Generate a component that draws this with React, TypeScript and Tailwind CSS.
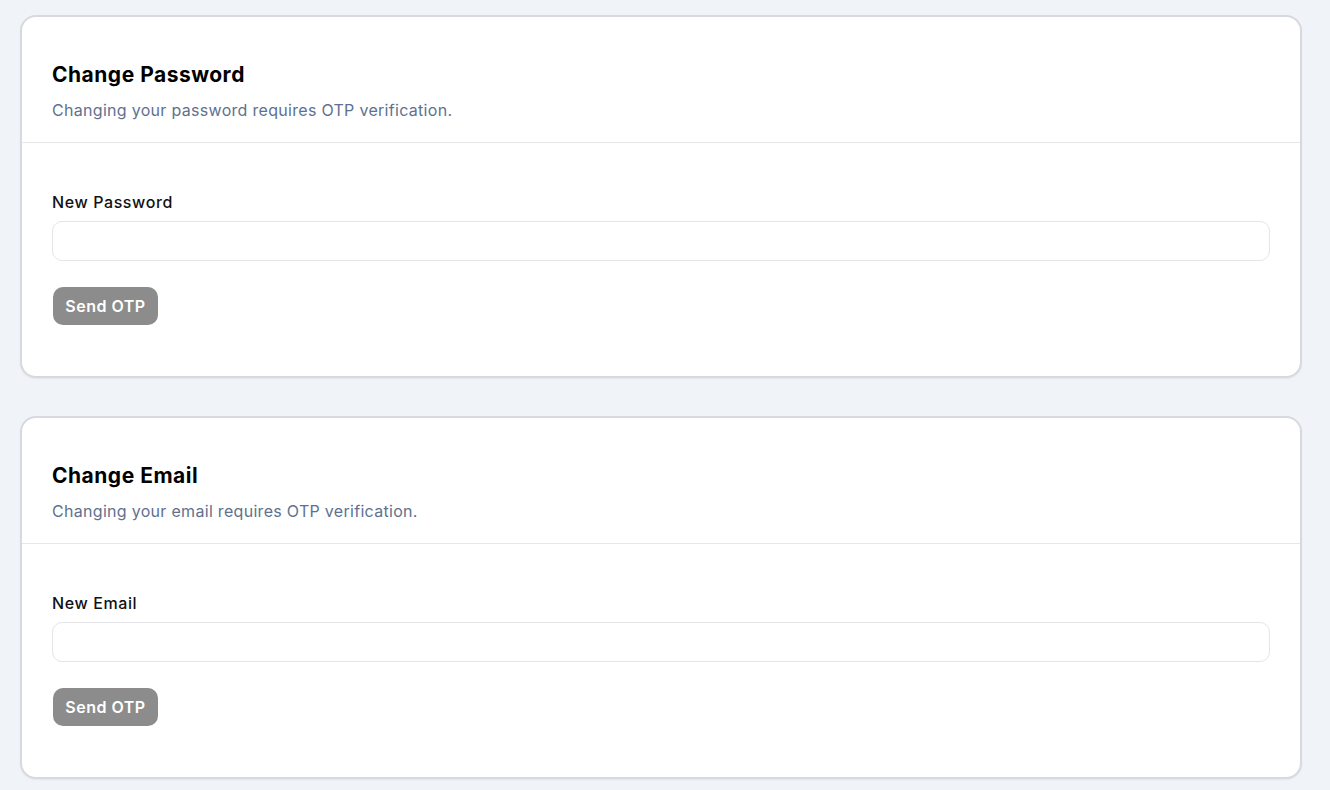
import { useState } from "react";

type OtpCardProps = {
  title: string;
  description: string;
  label: string;
  type: string;
};

const OtpCard = ({ title, description, label, type }: OtpCardProps) => {
  const [value, setValue] = useState("");

  return (
    <div className="rounded-2xl border-2 border-[#d6d9de] bg-white shadow-[0_1px_2px_rgba(0,0,0,0.06)]">
      <div className="px-[30px] pt-[44px] pb-[20px]">
        <h2 className="text-[21px] leading-7 font-bold tracking-[0.5px] text-black">{title}</h2>
        <p className="mt-[9px] text-[16px] leading-6 tracking-[0.3px] text-[#60718f]">{description}</p>
      </div>
      <div className="border-t border-[#e5e7eb] px-[30px] pt-[47px] pb-[51px]">
        <label className="block text-[16px] leading-6 font-medium tracking-[0.6px] text-[#111]">{label}</label>
        <input
          type={type}
          value={value}
          onChange={(e) => setValue(e.target.value)}
          className="mt-[7px] block h-10 w-full rounded-[10px] border border-[#e3e5e8] bg-white px-3 text-[16px] outline-none"
        />
        <button
          disabled
          className="mt-[26px] ml-px flex h-[38px] w-[105px] items-center justify-center rounded-[10px] bg-[#8c8c8c] text-[16px] font-semibold tracking-[0.5px] text-white"
        >
          Send OTP
        </button>
      </div>
    </div>
  );
};

export default function App() {
  return (
    <div
      className="min-h-screen bg-[#f0f3f8] pt-[15px] pl-5 pr-[28px] pb-4"
      style={{ fontFamily: "Inter, 'Noto Sans', sans-serif" }}
    >
      <div className="flex flex-col gap-[38px]">
        <OtpCard
          title="Change Password"
          description="Changing your password requires OTP verification."
          label="New Password"
          type="password"
        />
        <OtpCard
          title="Change Email"
          description="Changing your email requires OTP verification."
          label="New Email"
          type="email"
        />
      </div>
    </div>
  );
}
